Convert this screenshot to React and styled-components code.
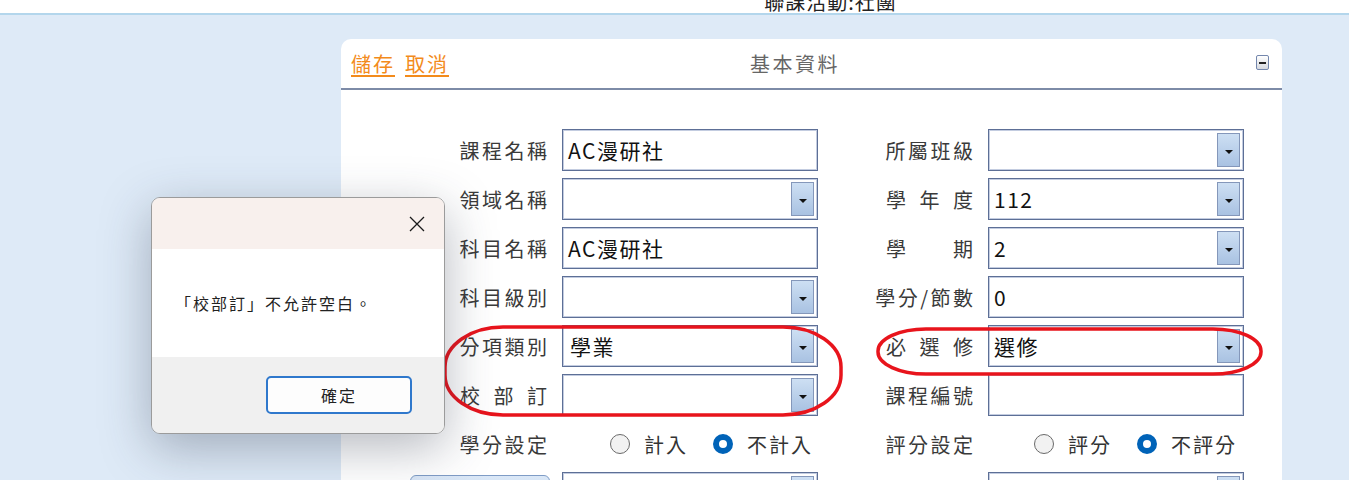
import React from "react";
import styled, { createGlobalStyle } from "styled-components";

const GlobalStyle = createGlobalStyle`
  body {
    margin: 0;
    background-color: #deeaf7;
    font-family: "Noto Sans CJK TC", "Noto Sans", sans-serif;
  }
`;

const Page = styled.div`
  position: relative;
  height: 480px;
  overflow: hidden;
`;

const TopBar = styled.div`
  height: 13px;
  background-color: #fff;
  border-bottom: 2px solid #b3d6ec;
  overflow: hidden;
  padding-left: 312px;
  text-align: center;
`;

const TopTitle = styled.div`
  font-size: 20px;
  line-height: 4px;
  letter-spacing: 1px;
  color: #222;
`;

const Main = styled.div`
  padding: 24px 0 0 341px;
`;

const Panel = styled.div`
  width: 941px;
  height: 460px;
  background-color: #fff;
  border-radius: 10px 10px 0 0;
`;

const PanelHeader = styled.div`
  height: 49px;
  display: grid;
  grid-template-columns: 399px auto 1fr;
  align-items: center;
  padding: 0 13px 0 10px;
  border-bottom: 2px solid #7d8ba7;
`;

const Links = styled.div`
  display: flex;
  gap: 12px;
`;

const HeaderLink = styled.a`
  font-size: 20px;
  letter-spacing: 2px;
  margin-right: -2px;
  color: #f38b1b;
  text-decoration: underline;
  text-underline-offset: 3px;
  cursor: pointer;
`;

const PanelTitle = styled.div`
  font-size: 20px;
  letter-spacing: 2.5px;
  color: #666;
`;

const Collapse = styled.span`
  justify-self: end;
  position: relative;
  width: 13px;
  height: 15px;
  box-sizing: border-box;
  border: 1px solid #7487ad;
  border-radius: 2px;
  background: linear-gradient(#ffffff, #d6d9df);
  margin-top: -3px;
  &::after {
    content: "";
    position: absolute;
    left: 2px;
    right: 2px;
    top: 6px;
    height: 2px;
    background: #222;
  }
`;

const Form = styled.div`
  display: grid;
  grid-template-columns: 87px 256px 140px 256px;
  grid-auto-rows: 42px;
  column-gap: 15px;
  row-gap: 7px;
  padding: 39px 0 0 119px;
`;

const Label = styled.div`
  justify-self: end;
  width: ${(p) => (p.$spread ? "87px" : "auto")};
  display: flex;
  align-items: center;
  justify-content: ${(p) => (p.$spread ? "space-between" : "flex-end")};
  font-size: 20px;
  color: #3a3a3a;
  white-space: nowrap;
  letter-spacing: ${(p) => (p.$spread ? "0" : "2.5px")};
  margin-right: ${(p) => (p.$spread ? "0" : "-2.5px")};
`;

const Box = styled.div`
  display: flex;
  align-items: center;
  box-sizing: border-box;
  height: 42px;
  border: 1px solid #5d6f96;
  box-shadow: inset 0 0 0 1px #c3cce0;
  background-color: #fff;
  padding: 0 3px 0 5px;
`;

const Value = styled.span`
  flex: 1;
  font-size: 21px;
  letter-spacing: 1.5px;
  color: #111;
  padding-left: ${(p) => (p.$indent ? "2px" : "0")};
`;

const DropButton = styled.span`
  width: 23px;
  height: 34px;
  box-sizing: border-box;
  border: 1px solid #8497ba;
  background: linear-gradient(#cddff3, #a9c2e2);
  display: flex;
  align-items: center;
  justify-content: center;
  &::after {
    content: "";
    margin-top: 3px;
    border-left: 4px solid transparent;
    border-right: 4px solid transparent;
    border-top: 4px solid #111;
  }
`;

const RadioGroup = styled.div`
  display: flex;
  align-items: center;
  padding-left: ${(p) => p.$offset}px;
  white-space: nowrap;
`;

const RadioOption = styled.label`
  display: flex;
  align-items: center;
  flex-shrink: 0;
  gap: 14px;
  margin-right: 25px;
  font-size: 20px;
  letter-spacing: 2px;
  color: #333;
`;

const RadioDot = styled.span`
  flex-shrink: 0;
  width: 20px;
  height: 20px;
  box-sizing: border-box;
  border-radius: 50%;
  border: ${(p) => (p.$checked ? "6px solid #0063b8" : "1px solid #6a6a6a")};
  background-color: ${(p) => (p.$checked ? "#fff" : "#f2f2f2")};
`;

const BlueButton = styled.div`
  justify-self: end;
  width: 140px;
  height: 40px;
  margin: 3px -3px 0 0;
  box-sizing: border-box;
  border: 1px solid #7f9cc6;
  border-radius: 6px;
  background: linear-gradient(#dbe8f7, #b9d0ee);
`;

const Annotations = styled.svg`
  position: absolute;
  left: 0;
  top: 0;
  pointer-events: none;
`;

const Dialog = styled.div`
  position: absolute;
  left: 151px;
  top: 197px;
  width: 292px;
  border: 1px solid #9b9b9b;
  border-radius: 9px;
  overflow: hidden;
  box-shadow: 0 14px 50px rgba(45, 55, 75, 0.35);
`;

const DialogHead = styled.div`
  height: 51px;
  background-color: #f8f0ed;
  display: flex;
  justify-content: flex-end;
  align-items: center;
  padding-right: 19px;
`;

const DialogBody = styled.div`
  height: 108px;
  background-color: #fff;
  display: flex;
  align-items: center;
  padding-left: 23px;
  font-size: 16px;
  letter-spacing: 2px;
  color: #222;
`;

const DialogFoot = styled.div`
  height: 76px;
  background-color: #f0f0f0;
  display: flex;
  justify-content: flex-end;
  padding: 19px 32px 0 0;
  box-sizing: border-box;
`;

const OkButton = styled.button`
  width: 146px;
  height: 38px;
  border: 2px solid #2f78cc;
  border-radius: 5px;
  background-color: #fdfdfd;
  font-family: inherit;
  font-size: 16px;
  letter-spacing: 2px;
  color: #222;
`;

const FieldLabel = ({ text, spread }) =>
  spread ? (
    <Label $spread>
      {text.split("").map((c, i) => (
        <span key={i}>{c}</span>
      ))}
    </Label>
  ) : (
    <Label>{text}</Label>
  );

const Field = ({ value = "", select, indent }) => (
  <Box>
    <Value $indent={indent}>{value}</Value>
    {select && <DropButton />}
  </Box>
);

const Radios = ({ options, checked, offset }) => (
  <RadioGroup $offset={offset}>
    {options.map((o) => (
      <RadioOption key={o}>
        <RadioDot $checked={o === checked} />
        {o}
      </RadioOption>
    ))}
  </RadioGroup>
);

const rows = [
  [{ label: "課程名稱", value: "AC漫研社" }, { label: "所屬班級", select: true }],
  [{ label: "領域名稱", select: true }, { label: "學年度", spread: true, value: "112", select: true }],
  [{ label: "科目名稱", value: "AC漫研社" }, { label: "學期", spread: true, value: "2", select: true }],
  [{ label: "科目級別", select: true }, { label: "學分/節數", value: "0" }],
  [{ label: "分項類別", value: "學業", select: true, indent: true }, { label: "必選修", spread: true, value: "選修", select: true }],
  [{ label: "校部訂", spread: true, select: true }, { label: "課程編號" }],
];

const App = () => {
  return (
    <Page>
      <GlobalStyle />
      <TopBar>
        <TopTitle>聯課活動:社團</TopTitle>
      </TopBar>
      <Main>
        <Panel>
          <PanelHeader>
            <Links>
              <HeaderLink>儲存</HeaderLink>
              <HeaderLink>取消</HeaderLink>
            </Links>
            <PanelTitle>基本資料</PanelTitle>
            <Collapse />
          </PanelHeader>
          <Form>
            {rows.map((row, i) =>
              row.map((f, j) => (
                <React.Fragment key={`${i}-${j}`}>
                  <FieldLabel text={f.label} spread={f.spread} />
                  <Field value={f.value} select={f.select} indent={f.indent} />
                </React.Fragment>
              ))
            )}
            <FieldLabel text="學分設定" />
            <Radios options={["計入", "不計入"]} checked="不計入" offset={48} />
            <FieldLabel text="評分設定" />
            <Radios options={["評分", "不評分"]} checked="不評分" offset={46} />
            <BlueButton />
            <Field select />
            <span />
            <Field select />
          </Form>
        </Panel>
      </Main>

      <Annotations width="1349" height="480">
        <rect x="445" y="327" width="396" height="88" rx="58" ry="40" fill="none" stroke="#e8141c" strokeWidth="3.5" />
        <rect x="878" y="329" width="383" height="45" rx="48" ry="22" fill="none" stroke="#e8141c" strokeWidth="3.5" />
      </Annotations>

      <Dialog>
        <DialogHead>
          <svg width="16" height="16" viewBox="0 0 16 16">
            <path d="M1 1 L15 15 M15 1 L1 15" stroke="#1a1a1a" strokeWidth="1.3" />
          </svg>
        </DialogHead>
        <DialogBody>「校部訂」不允許空白。</DialogBody>
        <DialogFoot>
          <OkButton>確定</OkButton>
        </DialogFoot>
      </Dialog>
    </Page>
  );
};

export default App;
